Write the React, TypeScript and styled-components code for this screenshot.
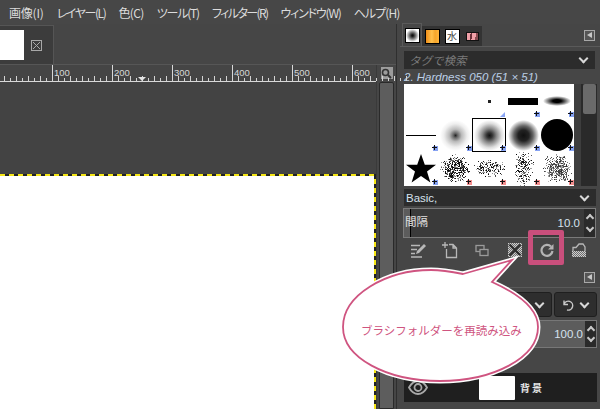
import styled, { createGlobalStyle } from 'styled-components'

const Global = createGlobalStyle`
    html, body { margin: 0; padding: 0; background: #464646; }
    *, *::before, *::after { box-sizing: border-box; }
`

// kana in the reference font is much narrower, so each label gets its own tracking
const menuItems = [
    { label: '画像(I)', tracking: -0.2 },
    { label: 'レイヤー(L)', tracking: -1.4 },
    { label: '色(C)', tracking: -0.6 },
    { label: 'ツール(T)', tracking: -1.2 },
    { label: 'フィルター(R)', tracking: -1.6 },
    { label: 'ウィンドウ(W)', tracking: -1.2 },
    { label: 'ヘルプ(H)', tracking: -0.9 },
]
const rulerLabels = ['100', '200', '300', '400', '500', '600']

const bubblePath =
    'M122 24 L171 10 L151 32 C 180 45, 197 60, 197 77 C 197 108, 152 131, 99 131 C 46 131, 2 108, 2 77 C 2 45, 45 20, 90 20 C 102 20, 112 22, 122 24 Z'

const speckle = (seed: number, count: number, rx: number, ry: number) => {
    const dots: { x: number; y: number; o: number }[] = []
    let s = seed
    const next = () => {
        s = (s * 9301 + 49297) % 233280
        return s / 233280
    }
    for (let i = 0; i < count; i++) {
        const a = next() * Math.PI * 2
        const r = (next() + next()) / 2
        dots.push({ x: 17 + Math.cos(a) * r * rx * 1.6, y: 16 + Math.sin(a) * r * ry * 1.6, o: 0.3 + next() * 0.7 })
    }
    return dots
}

type SpeckleProps = { seed: number; count: number; rx: number; ry: number; tone?: string }

const Speckle = ({ seed, count, rx, ry, tone = '#000' }: SpeckleProps) => (
    <svg width="34" height="34">
        {speckle(seed, count, rx, ry).map((d, i) => (
            <rect key={i} x={Math.round(d.x)} y={Math.round(d.y)} width="1" height="1" fill={tone} opacity={d.o} />
        ))}
    </svg>
)

const Mark = ({ red }: { red?: boolean }) => (
    <PlusMark width="6" height="6">
        <rect x="1" y="1" width="5" height="5" fill={red ? '#f58f8f' : '#86a2f2'} />
        <path d="M2 0h1v5H2zM0 2h5v1H0z" fill="#111" />
    </PlusMark>
)

const App = () => {
    return (
        <Page>
            <Global />
            <MenuBar>
                {menuItems.map((m) => (
                    <MenuItem key={m.label} $tracking={m.tracking}>
                        {m.label}
                    </MenuItem>
                ))}
            </MenuBar>
            <Main>
                <ImageColumn>
                    <TabRow>
                        <ImageTab>
                            <Thumb />
                            <svg width="11" height="11" viewBox="0 0 11 11">
                                <rect x="0.5" y="0.5" width="10" height="10" fill="none" stroke="#a8a8a8" />
                                <path d="M2 2l7 7M9 2l-7 7" stroke="#a8a8a8" />
                            </svg>
                        </ImageTab>
                    </TabRow>
                    <EditorFrame>
                        <EditorLeft>
                            <Ruler>
                                <RulerFirst />
                                {rulerLabels.map((l) => (
                                    <RulerSegment key={l}>
                                        <RulerLabel>{l}</RulerLabel>
                                    </RulerSegment>
                                ))}
                                <Pointer />
                            </Ruler>
                            <Viewport>
                                <Canvas />
                            </Viewport>
                        </EditorLeft>
                        <ScrollColumn>
                            <ZoomButton>
                                <svg width="11" height="11" viewBox="0 0 11 11">
                                    <circle cx="4.5" cy="4.5" r="3" fill="none" stroke="#333" strokeWidth="1.6" />
                                    <path d="M7 7l3 3" stroke="#333" strokeWidth="2" />
                                </svg>
                            </ZoomButton>
                            <VScroll />
                        </ScrollColumn>
                    </EditorFrame>
                </ImageColumn>

                <Dock>
                    <DockTabs>
                        <DockTab $active>
                            <TabSwatch $bg="radial-gradient(circle closest-side, #111 10%, #777 50%, #fff 100%)" />
                        </DockTab>
                        <DockTab>
                            <TabSwatch $bg="linear-gradient(90deg, #f08f1a 0%, #ffc14d 45%, #f5a52a 70%, #ffb53c 100%)" />
                        </DockTab>
                        <DockTab>
                            <TabSwatch $bg="#fff">
                                <TabGlyph>水</TabGlyph>
                            </TabSwatch>
                        </DockTab>
                        <DockTab>
                            <SmallSwatch />
                        </DockTab>
                        <DockMenu>
                            <DockMenuIcon />
                        </DockMenu>
                    </DockTabs>
                    <BrushPanel>
                        <TagFilter>
                            <TagText>タグで検索</TagText>
                            <Chevron />
                        </TagFilter>
                        <BrushName>2. Hardness 050 (51 × 51)</BrushName>
                        <BrushArea>
                            <BrushGrid>
                                <BrushCell />
                                <BrushCell />
                                <BrushCell>
                                    <Dot />
                                    <CornerTriangle />
                                </BrushCell>
                                <BrushCell>
                                    <HardBar />
                                    <Mark />
                                </BrushCell>
                                <BrushCell>
                                    <SoftEllipse />
                                    <Mark />
                                </BrushCell>
                                <BrushCell>
                                    <ThinLine />
                                    <Mark />
                                </BrushCell>
                                <BrushCell>
                                    <RoundBrush $stops="#222 0%, #666 14%, #bbb 40%, #eee 75%, #fff 100%" />
                                    <Mark />
                                </BrushCell>
                                <BrushCell $selected>
                                    <RoundBrush $stops="#111 0%, #333 18%, #888 45%, #ddd 78%, #fff 100%" />
                                    <Mark />
                                </BrushCell>
                                <BrushCell>
                                    <RoundBrush $stops="#111 0%, #222 35%, #666 62%, #ccc 88%, #fff 100%" />
                                    <Mark />
                                </BrushCell>
                                <BrushCell>
                                    <SolidRound />
                                    <Mark />
                                </BrushCell>
                                <BrushCell>
                                    <svg width="34" height="34" viewBox="0 0 34 34">
                                        <path d="M17 2l3.800 10.800H32l-9 6.700 3.400 11L17 24l-9.400 6.500 3.400-11-9-6.700h11.200z" fill="#000" />
                                    </svg>
                                    <Mark />
                                </BrushCell>
                                <BrushCell>
                                    <Speckle seed={11} count={420} rx={10} ry={9} />
                                    <Mark red />
                                </BrushCell>
                                <BrushCell>
                                    <Speckle seed={37} count={190} rx={12} ry={6} />
                                    <Mark red />
                                </BrushCell>
                                <BrushCell>
                                    <Speckle seed={71} count={200} rx={7} ry={13} />
                                    <Mark red />
                                </BrushCell>
                                <BrushCell>
                                    <Speckle seed={93} count={420} rx={10} ry={10} tone="#333" />
                                    <Mark red />
                                </BrushCell>
                            </BrushGrid>
                            <BrushScroll>
                                <BrushThumb />
                            </BrushScroll>
                        </BrushArea>
                        <PresetSelect>
                            <PresetText>Basic,</PresetText>
                            <Chevron />
                        </PresetSelect>
                        <SpacingRow>
                            <SpacingTrack>
                                <SpacingLabel>間隔</SpacingLabel>
                                <SpacingValue>10.0</SpacingValue>
                            </SpacingTrack>
                            <SpinColumn>
                                <SpinUp />
                                <SpinDown />
                            </SpinColumn>
                        </SpacingRow>
                        <BrushTools>
                            <ToolButton>
                                <svg width="18" height="18" viewBox="0 0 18 18" fill="none" stroke="#b8b8b8" strokeWidth="1.3">
                                    <path d="M2 4.500h9M2 8.500h6M2 12.500h4M2 16h11" />
                                    <path d="M7 13l1-3 7-7 2 2-7 7z" fill="#b8b8b8" stroke="none" />
                                </svg>
                            </ToolButton>
                            <ToolButton>
                                <svg width="18" height="18" viewBox="0 0 18 18" fill="none" stroke="#b8b8b8" strokeWidth="1.3">
                                    <path d="M8 3.500h4l3.500 3.500v9.500h-10V8M1 4h6M4 1v6M12 3.500V7h3.500" />
                                </svg>
                            </ToolButton>
                            <ToolButton>
                                <svg width="18" height="18" viewBox="0 0 18 18" fill="none" stroke="#9a9a9a" strokeWidth="1.3">
                                    <rect x="3" y="4.500" width="8" height="6" />
                                    <rect x="7" y="8.500" width="8" height="6" fill="#464646" />
                                </svg>
                            </ToolButton>
                            <ToolButton>
                                <svg width="18" height="18" viewBox="0 0 18 18">
                                    <defs>
                                        <pattern id="dither" width="2" height="2" patternUnits="userSpaceOnUse">
                                            <rect width="2" height="2" fill="#6e6e6e" />
                                            <rect width="1" height="1" fill="#cfcfcf" />
                                            <rect x="1" y="1" width="1" height="1" fill="#cfcfcf" />
                                        </pattern>
                                    </defs>
                                    <rect x="2" y="2" width="14" height="14" fill="url(#dither)" />
                                    <path d="M3.500 3.500l11 11M14.500 3.500l-11 11" stroke="#2e2e2e" strokeWidth="2.4" />
                                </svg>
                            </ToolButton>
                            <RefreshButton>
                                <svg width="18" height="18" viewBox="0 0 18 18" fill="none" stroke="#b4b4b4" strokeWidth="2.2">
                                    <path d="M13 5.500A5.500 5.500 0 1 0 14.500 10" />
                                    <path d="M15.500 3v5.500h-5.500z" fill="#b4b4b4" stroke="none" />
                                </svg>
                            </RefreshButton>
                            <ToolButton>
                                <svg width="18" height="18" viewBox="0 0 18 18" fill="none" stroke="#b8b8b8" strokeWidth="1.3">
                                    <path d="M3 10V6.500h3L9 3h4l2 3v4" />
                                    <path d="M2 10h14v6H2z" fill="url(#dither)" stroke="none" />
                                </svg>
                            </ToolButton>
                        </BrushTools>
                    </BrushPanel>
                    <LayersTabs>
                        <DockMenuIcon />
                    </LayersTabs>
                    <LayersPanel>
                        <ModeRow>
                            <ModeBox>
                                <Chevron />
                            </ModeBox>
                            <ModeSmall>
                                <svg width="14" height="14" viewBox="0 0 14 14" fill="none" stroke="#c8c8c8" strokeWidth="1.4">
                                    <path d="M3 2.500v4h4M3 6a4.500 4.500 0 1 1 3 6" />
                                </svg>
                                <Chevron />
                            </ModeSmall>
                        </ModeRow>
                        <OpacityRow>
                            <OpacityValue>100.0</OpacityValue>
                            <SpinColumn>
                                <SpinUp />
                                <SpinDown />
                            </SpinColumn>
                        </OpacityRow>
                        <LockRow />
                        <LayerRow>
                            <svg width="20" height="15" viewBox="0 0 20 15" fill="none" stroke="#a8a8a8" strokeWidth="1.8">
                                <path d="M1 7.500C3.500 3 6.500 1 10 1s6.500 2 9 6.500c-2.500 4.500-5.500 6.500-9 6.500s-6.500-2-9-6.500z" />
                                <circle cx="10" cy="7.500" r="3.500" />
                            </svg>
                            <LayerThumb />
                            <LayerName>背景</LayerName>
                        </LayerRow>
                    </LayersPanel>
                </Dock>
            </Main>

            <Callout>
                <svg width="230" height="160" viewBox="0 0 230 160">
                    <path d={bubblePath} fill="#fff" stroke="#fff" strokeWidth="5" />
                    <path d={bubblePath} fill="#fff" stroke="#cf5480" strokeWidth="1.8" />
                </svg>
                <CalloutText>ブラシフォルダーを再読み込み</CalloutText>
            </Callout>
        </Page>
    )
}

export default App

const cjk = `"Noto Sans CJK JP", "Liberation Sans", sans-serif`

const Page = styled.div`
    position: relative;
    width: 600px;
    height: 409px;
    overflow: hidden;
    background: #464646;
    font-family: ${cjk};
    display: flex;
    flex-direction: column;
`

const MenuBar = styled.div`
    height: 24px;
    flex: none;
    display: flex;
    align-items: center;
    gap: 13px;
    padding-left: 9px;
    background: #474747;
`

const MenuItem = styled.span<{ $tracking: number }>`
    font-size: 12px;
    letter-spacing: ${(p) => p.$tracking}px;
    font-feature-settings: "palt";
    color: #dcdcdc;
`

const Main = styled.div`
    flex: 1;
    display: flex;
    min-height: 0;
`

const ImageColumn = styled.div`
    width: 397px;
    flex: none;
    display: flex;
    flex-direction: column;
    border-right: 1px solid #2f2f2f;
`

const TabRow = styled.div`
    height: 41px;
    flex: none;
    padding-top: 1px;
    border-bottom: 1px solid #565656;
`

const ImageTab = styled.div`
    width: 54px;
    height: 39px;
    display: flex;
    align-items: center;
    gap: 7px;
    background: #3c3c3c;
    border-top: 1px solid #555;
    border-right: 1px solid #555;
`

const Thumb = styled.div`
    width: 24px;
    height: 30px;
    background: #fff;
`

const EditorFrame = styled.div`
    flex: 1;
    display: flex;
    min-height: 0;
`

const EditorLeft = styled.div`
    width: 377px;
    flex: none;
    display: flex;
    flex-direction: column;
    border-right: 1px solid #3a3a3a;
`

const Ruler = styled.div`
    position: relative;
    height: 17px;
    flex: none;
    display: flex;
    background: #454545;
    border-bottom: 1px solid #d8d8d8;
`

const ticks = (offset: number) => `
    repeating-linear-gradient(90deg, #d4d4d4 0 1px, transparent 1px 12px) ${offset}px bottom / 100% 5px no-repeat,
    repeating-linear-gradient(90deg, #d4d4d4 0 1px, transparent 1px 6px) ${offset}px bottom / 100% 3px no-repeat
`

const RulerFirst = styled.div`
    width: 52px;
    flex: none;
    background: ${ticks(4)};
`

const RulerSegment = styled.div`
    width: 60px;
    flex: none;
    border-left: 1px solid #d8d8d8;
    background: ${ticks(5)};
    padding-left: 1px;
`

const RulerLabel = styled.div`
    font-family: "Liberation Sans", sans-serif;
    font-size: 9.5px;
    line-height: 10px;
    margin-top: 3px;
    color: #d6d6d6;
`

const Pointer = styled.div`
    position: absolute;
    left: 138px;
    top: 12px;
    border-left: 4px solid transparent;
    border-right: 4px solid transparent;
    border-top: 4px solid #e4e4e4;
`

const Viewport = styled.div`
    flex: 1;
    padding-top: 92px;
    background: #434343;
`

const Canvas = styled.div`
    height: 100%;
    background:
        repeating-linear-gradient(90deg, #f5e616 0 5px, #222 5px 9px) top / 100% 2px no-repeat,
        repeating-linear-gradient(0deg, #f5e616 0 5px, #222 5px 9px) right / 2px 100% no-repeat,
        #fff;
`

const ScrollColumn = styled.div`
    flex: 1;
    display: flex;
    flex-direction: column;
    align-items: center;
    padding-top: 2px;
    gap: 3px;
`

const ZoomButton = styled.div`
    width: 12px;
    height: 12px;
    display: flex;
    align-items: center;
    justify-content: center;
    background: #9c9c9c;
`

const VScroll = styled.div`
    width: 15px;
    flex: 1;
    background: #5d5d5d;
    border: 1px solid #2a2a2a;
    border-radius: 2px 2px 0 0;
`

const Dock = styled.div`
    flex: 1;
    display: flex;
    flex-direction: column;
    min-width: 0;
    padding-left: 3px;
`

const DockTabs = styled.div`
    height: 23px;
    flex: none;
    display: flex;
    align-items: flex-end;
    padding-left: 2px;
    padding-right: 5px;
    border-bottom: 1px solid #5a5a5a;
`

const DockTab = styled.div<{ $active?: boolean }>`
    width: 20px;
    height: ${(p) => (p.$active ? 23 : 20)}px;
    display: flex;
    align-items: center;
    justify-content: center;
    background: ${(p) => (p.$active ? '#464646' : '#333')};
    border: ${(p) => (p.$active ? '1px solid #5a5a5a' : 'none')};
    border-bottom: none;
`

const TabSwatch = styled.div<{ $bg: string }>`
    width: 15px;
    height: 15px;
    display: flex;
    align-items: center;
    justify-content: center;
    background: ${(p) => p.$bg};
    border: 1px solid #000;
`

const TabGlyph = styled.span`
    font-size: 10px;
    line-height: 1;
    color: #444;
`

const SmallSwatch = styled.div`
    width: 13px;
    height: 9px;
    border: 1px solid #111;
    background: linear-gradient(100deg, #f0a0a8 0 30%, #6a3038 30% 45%, #f2a0a8 45% 75%, #8a4a50 75%);
`

const DockMenu = styled.div`
    margin-left: auto;
    align-self: center;
`

const DockMenuIcon = styled.div`
    position: relative;
    width: 11px;
    height: 11px;
    border: 1px solid #a8a8a8;
    background: #555;
    &::after {
        content: '';
        position: absolute;
        left: 2px;
        top: 1px;
        border-top: 3.500px solid transparent;
        border-bottom: 3.500px solid transparent;
        border-right: 5px solid #c8c8c8;
    }
`

const BrushPanel = styled.div`
    height: 221px;
    flex: none;
    display: flex;
    flex-direction: column;
    padding: 4px 3px 0 4px;
`

const TagFilter = styled.div`
    height: 18px;
    flex: none;
    margin-right: 2px;
    display: flex;
    align-items: center;
    justify-content: space-between;
    padding: 0 6px 0 5px;
    background: #2c2c2c;
`

const TagText = styled.span`
    font-size: 11.5px;
    font-style: italic;
    color: #7a7a7a;
`

const Chevron = styled.span`
    width: 7px;
    height: 7px;
    margin: -3px 2px 0 0;
    border-right: 2px solid #d8d8d8;
    border-bottom: 2px solid #d8d8d8;
    transform: rotate(45deg);
`

const BrushName = styled.div`
    height: 15px;
    flex: none;
    font-family: "Liberation Sans", sans-serif;
    font-size: 11.5px;
    font-style: italic;
    line-height: 17px;
    color: #bcd0e6;
`

const BrushArea = styled.div`
    height: 102px;
    flex: none;
    display: flex;
    background: #333;
`

const BrushGrid = styled.div`
    width: 170px;
    flex: none;
    display: grid;
    grid-template-columns: repeat(5, 34px);
    grid-auto-rows: 34px;
    background: #fff;
`

const BrushCell = styled.div<{ $selected?: boolean }>`
    position: relative;
    display: flex;
    align-items: center;
    justify-content: center;
    outline: ${(p) => (p.$selected ? '1px solid #000' : 'none')};
    outline-offset: -1px;
`

const PlusMark = styled.svg`
    position: absolute;
    right: 0;
    bottom: 1px;
`

const CornerTriangle = styled.div`
    position: absolute;
    right: 1px;
    bottom: 1px;
    border-left: 5px solid transparent;
    border-bottom: 5px solid #8aa6f5;
`

const Dot = styled.div`
    width: 3px;
    height: 3px;
    background: #222;
`

const HardBar = styled.div`
    width: 30px;
    height: 7px;
    background: #000;
`

const SoftEllipse = styled.div`
    width: 28px;
    height: 10px;
    border-radius: 50%;
    background: radial-gradient(ellipse closest-side, #000 30%, #fff 100%);
`

const ThinLine = styled.div`
    width: 30px;
    height: 1px;
    background: #000;
`

const RoundBrush = styled.div<{ $stops: string }>`
    width: 31px;
    height: 31px;
    border-radius: 50%;
    background: radial-gradient(circle closest-side, ${(p) => p.$stops});
`

const SolidRound = styled.div`
    width: 32px;
    height: 32px;
    border-radius: 50%;
    background: #000;
`

const BrushScroll = styled.div`
    flex: 1;
    display: flex;
    justify-content: flex-end;
    background: #2a2a2a;
    border-left: 7px solid #3e3e3e;
`

const BrushThumb = styled.div`
    width: 13px;
    height: 30px;
    margin-right: 1px;
    background: #6a6a6a;
    border-radius: 2px;
`

const PresetSelect = styled.div`
    height: 17px;
    flex: none;
    margin: 3px 1px 0 0;
    display: flex;
    align-items: center;
    justify-content: space-between;
    padding: 0 6px 0 2px;
    background: #2c2c2c;
`

const PresetText = styled.span`
    font-family: "Liberation Sans", sans-serif;
    font-size: 11.5px;
    color: #d6e2ee;
`

const SpacingRow = styled.div`
    height: 30px;
    flex: none;
    margin: 2px 1px 0 -1px;
    display: flex;
    border: 1px solid #7a7a7a;
    background: #3a3a3a;
`

const SpacingTrack = styled.div`
    flex: 1;
    display: flex;
    justify-content: space-between;
    padding: 0 4px 0 1px;
    background: linear-gradient(90deg, #5c5c5c 0 6px, #000 6px 7px, transparent 7px);
`

const SpacingLabel = styled.span`
    font-size: 11.5px;
    line-height: 24px;
    letter-spacing: 0;
    color: #e0e0e0;
`

const SpacingValue = styled.span`
    font-family: "Liberation Sans", sans-serif;
    font-size: 11.5px;
    line-height: 29px;
    color: #d6e2ee;
`

const SpinColumn = styled.div`
    width: 11px;
    flex: none;
    display: flex;
    flex-direction: column;
    align-items: center;
    justify-content: space-between;
    padding: 4px 0;
    background: #2a2a2a;
`

const SpinUp = styled.span`
    width: 6px;
    height: 6px;
    margin-top: 2px;
    border-left: 2px solid #c8c8c8;
    border-top: 2px solid #c8c8c8;
    transform: rotate(45deg);
`

const SpinDown = styled.span`
    width: 6px;
    height: 6px;
    margin-bottom: 2px;
    border-right: 2px solid #c8c8c8;
    border-bottom: 2px solid #c8c8c8;
    transform: rotate(45deg);
`

const BrushTools = styled.div`
    height: 24px;
    flex: none;
    display: flex;
    align-items: center;
    justify-content: space-between;
    padding: 0 9px 0 5px;
`

const ToolButton = styled.div`
    width: 18px;
    height: 18px;
    display: flex;
`

const RefreshButton = styled(ToolButton)`
    position: relative;
    &::after {
        content: '';
        position: absolute;
        left: -10px;
        top: -11px;
        width: 36px;
        height: 35px;
        border: 5px solid #c94f7c;
        border-radius: 2px;
    }
`

const LayersTabs = styled.div`
    height: 20px;
    flex: none;
    display: flex;
    align-items: center;
    justify-content: flex-end;
    padding-right: 5px;
    border-bottom: 1px solid #5a5a5a;
`

const LayersPanel = styled.div`
    flex: 1;
    display: flex;
    flex-direction: column;
    padding: 4px 3px 0 4px;
`

const ModeRow = styled.div`
    height: 25px;
    flex: none;
    display: flex;
    gap: 2px;
`

const ModeBox = styled.div`
    flex: 1;
    display: flex;
    align-items: center;
    justify-content: flex-end;
    padding-right: 6px;
    background: #2e2e2e;
    border: 1px solid #1f1f1f;
    border-radius: 3px;
`

const ModeSmall = styled.div`
    width: 43px;
    flex: none;
    display: flex;
    align-items: center;
    gap: 6px;
    padding-left: 6px;
    background: #2e2e2e;
    border: 1px solid #1f1f1f;
    border-radius: 3px;
`

const OpacityRow = styled.div`
    height: 28px;
    flex: none;
    margin-top: 3px;
    display: flex;
    justify-content: flex-end;
    background: #5c5c5c;
    border: 1px solid #777;
`

const OpacityValue = styled.span`
    align-self: center;
    margin-right: 2px;
    font-family: "Liberation Sans", sans-serif;
    font-size: 11.5px;
    color: #d6e2ee;
`

const LockRow = styled.div`
    height: 25px;
    flex: none;
`

const LayerRow = styled.div`
    height: 29px;
    flex: none;
    display: flex;
    align-items: center;
    padding-left: 4px;
    background: #1f1f1f;
`

const LayerThumb = styled.div`
    width: 36px;
    height: 24px;
    margin-left: 51px;
    border-radius: 1px;
    background: #fff;
`

const LayerName = styled.span`
    margin-left: 5px;
    font-size: 10px;
    font-weight: 700;
    letter-spacing: 2px;
    color: #e4e4e4;
`

const Callout = styled.div`
    position: absolute;
    left: 341px;
    top: 250px;
    width: 230px;
    height: 160px;
`

const CalloutText = styled.div`
    position: absolute;
    left: 20px;
    top: 71px;
    font-size: 11.5px;
    line-height: 18px;
    white-space: nowrap;
    color: #cf5480;
`
